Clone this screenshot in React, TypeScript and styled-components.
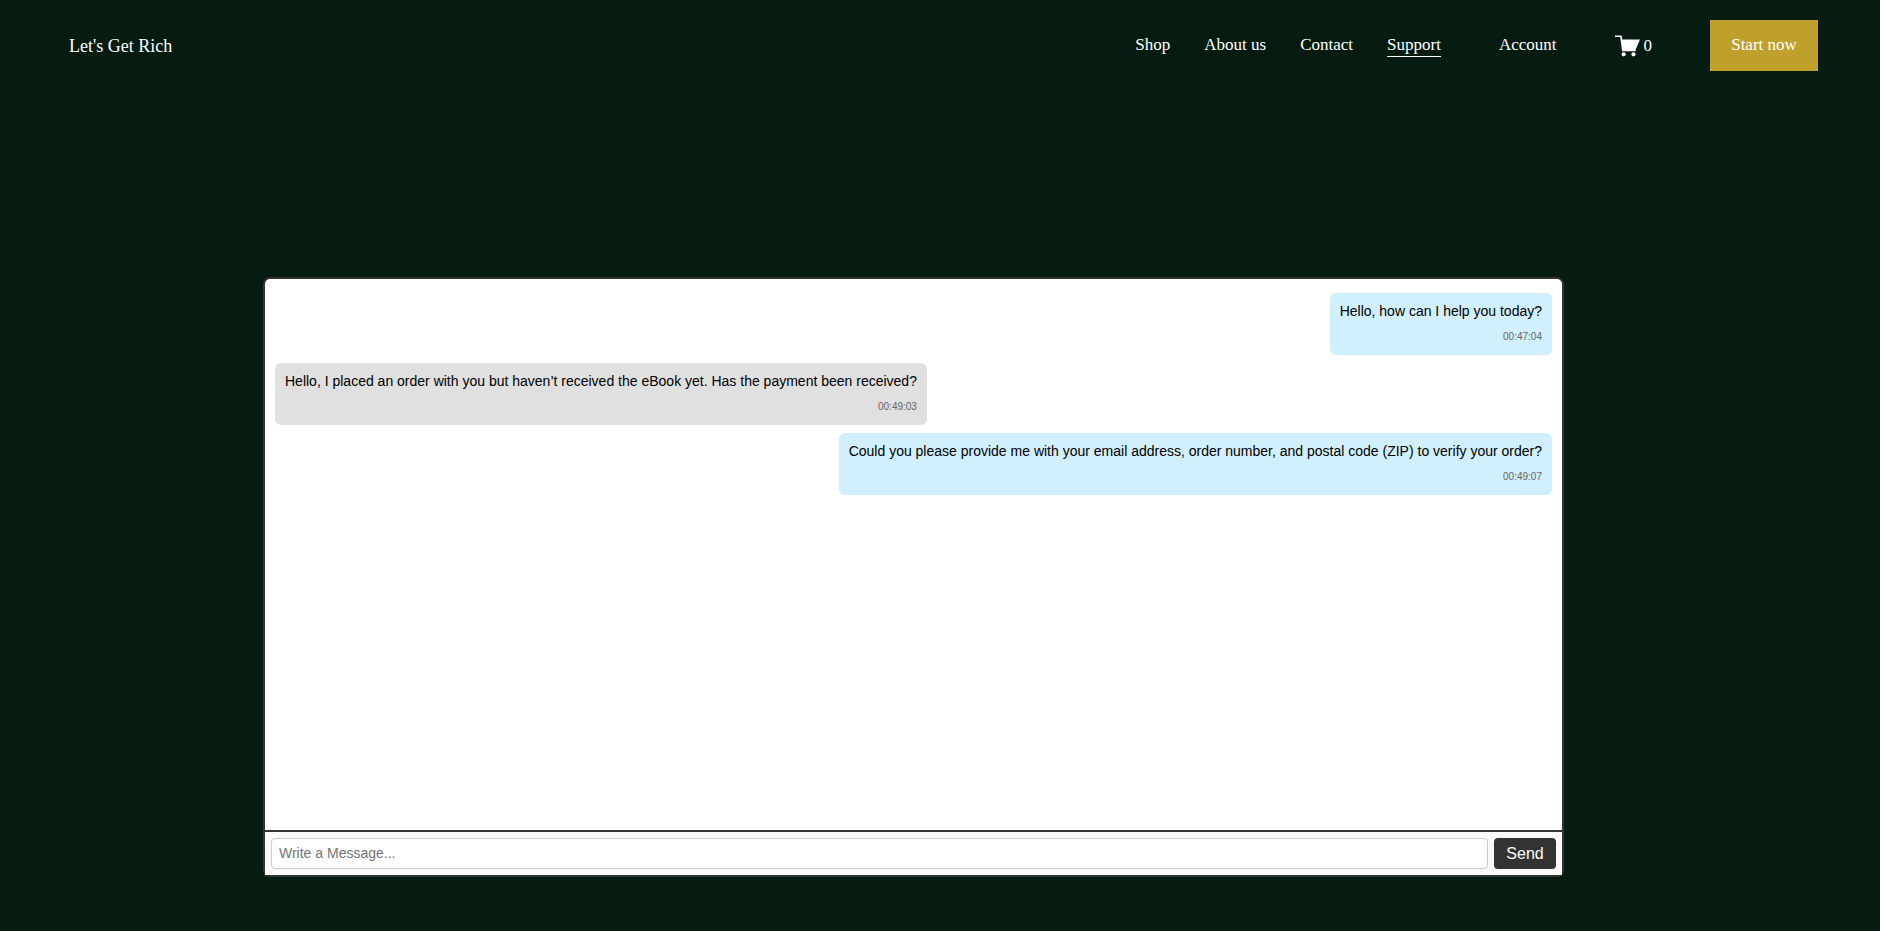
import React from "react";
import styled, { createGlobalStyle } from "styled-components";

const GlobalStyle = createGlobalStyle`
  *, *::before, *::after { box-sizing: border-box; }
  body {
    margin: 0;
    background: #061c11;
    font-family: "Liberation Sans", Arial, sans-serif;
  }
`;

const Page = styled.div`
  min-height: 100vh;
  background: #061c11;
`;

const Header = styled.header`
  display: flex;
  align-items: center;
  justify-content: space-between;
  padding: 20px 62px 20px 69px;
  font-family: "Liberation Serif", "Times New Roman", serif;
  font-size: 17px;
  line-height: 22px;
  color: #fff;
`;

const Logo = styled.a`
  font-size: 18px;
  color: inherit;
  text-decoration: none;
`;

const Actions = styled.div`
  display: flex;
  align-items: center;
  gap: 58px;
`;

const Nav = styled.nav`
  display: flex;
  gap: 34px;
`;

const NavLink = styled.a<{ $active?: boolean }>`
  border-bottom: 1px solid ${(p) => (p.$active ? "#fff" : "transparent")};
  color: inherit;
  text-decoration: none;
`;

const CartLink = styled.a`
  display: flex;
  align-items: center;
  gap: 4px;
  color: inherit;
  text-decoration: none;
`;

const CartIcon = styled.svg`
  display: block;
  width: 25px;
  height: 22px;
  fill: #fff;
`;

const StartButton = styled.button`
  min-width: 108px;
  height: 51px;
  padding: 0 18px 2px;
  border: 0;
  background: #bfa02a;
  color: #fff;
  font: inherit;
  cursor: pointer;
`;

const Main = styled.main`
  display: grid;
  grid-template-columns: 263fr 1301fr 316fr;
  padding: 186px 0 54px;
`;

const Chat = styled.section`
  grid-column: 2;
  border: 2px solid #333;
  border-radius: 7px;
  background: #fff;
`;

const Messages = styled.div`
  display: flex;
  flex-direction: column;
  gap: 8px;
  min-height: 551px;
  padding: 14px 10px;
`;

const Bubble = styled.article<{ $own?: boolean }>`
  display: flex;
  flex-direction: column;
  gap: 9px;
  align-self: ${(p) => (p.$own ? "flex-end" : "flex-start")};
  min-height: 62px;
  padding: 10px 10px 9px;
  border-radius: 6px;
  background: ${(p) => (p.$own ? "#d0efff" : "#e0e0e0")};
`;

const MessageText = styled.p`
  margin: 0;
  font-size: 14px;
  line-height: 16px;
  color: #000;
`;

const MessageTime = styled.time`
  align-self: flex-end;
  font-size: 10px;
  line-height: 18px;
  color: #666;
`;

const Composer = styled.form`
  display: flex;
  gap: 6px;
  padding: 6px;
  border-top: 2px solid #333;
  background: #f9f9f9;
`;

const MessageInput = styled.input`
  flex: 1;
  min-width: 0;
  height: 31px;
  padding: 0 7px 2px;
  border: 1px solid #ccc;
  border-radius: 4px;
  background: #fff;
  font: 14px "Liberation Sans", Arial, sans-serif;

  &::placeholder {
    color: #757575;
  }
`;

const SendButton = styled.button`
  min-width: 62px;
  height: 31px;
  padding: 0 12px;
  border: 0;
  border-radius: 4px;
  background: #333;
  color: #fff;
  font: 16px "Liberation Sans", Arial, sans-serif;
  cursor: pointer;
`;

const links = [
  { label: "Shop" },
  { label: "About us" },
  { label: "Contact" },
  { label: "Support", active: true },
];

const messages = [
  { text: "Hello, how can I help you today?", time: "00:47:04", own: true },
  {
    text: "Hello, I placed an order with you but haven’t received the eBook yet. Has the payment been received?",
    time: "00:49:03",
    own: false,
  },
  {
    text: "Could you please provide me with your email address, order number, and postal code (ZIP) to verify your order?",
    time: "00:49:07",
    own: true,
  },
];

export default function App() {
  return (
    <Page>
      <GlobalStyle />
      <Header>
        <Logo href="#">Let's Get Rich</Logo>
        <Actions>
          <Nav>
            {links.map((l) => (
              <NavLink key={l.label} href="#" $active={l.active}>
                {l.label}
              </NavLink>
            ))}
          </Nav>
          <NavLink href="#">Account</NavLink>
          <CartLink href="#">
            <CartIcon viewBox="0 0 25 22" aria-hidden="true">
              <path d="M0 0.5H6.6L7.3 4.6H25L20.7 14.6V16.2H7.1L5.2 2H0Z" />
              <circle cx="8.7" cy="19.3" r="2.1" />
              <circle cx="18.5" cy="19.3" r="2.1" />
            </CartIcon>
            <span>0</span>
          </CartLink>
          <StartButton type="button">Start now</StartButton>
        </Actions>
      </Header>
      <Main>
        <Chat aria-label="Support chat">
          <Messages>
            {messages.map((m) => (
              <Bubble key={m.time} $own={m.own}>
                <MessageText>{m.text}</MessageText>
                <MessageTime>{m.time}</MessageTime>
              </Bubble>
            ))}
          </Messages>
          <Composer onSubmit={(e) => e.preventDefault()}>
            <MessageInput type="text" aria-label="Write a Message" placeholder="Write a Message..." />
            <SendButton type="submit">Send</SendButton>
          </Composer>
        </Chat>
      </Main>
    </Page>
  );
}
